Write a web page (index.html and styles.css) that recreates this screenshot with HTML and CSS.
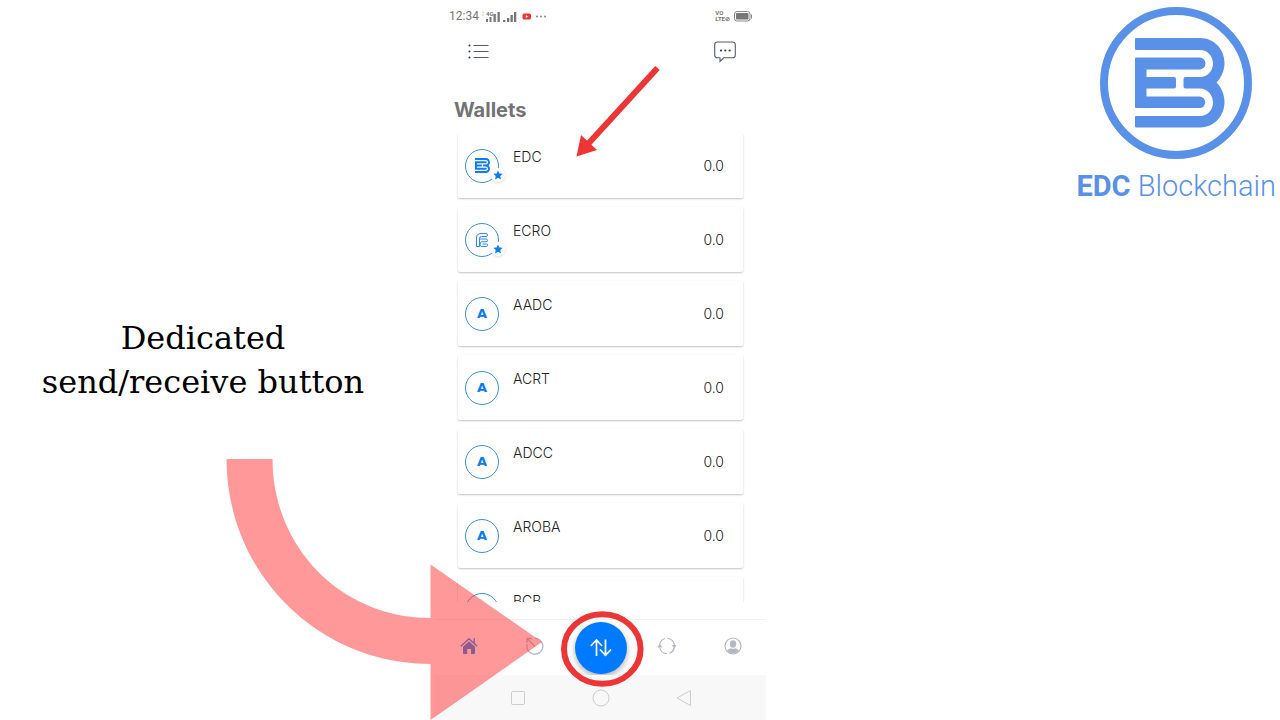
FILE: index.html
```
<!DOCTYPE html>
<html lang="en">
<head>
  <meta charset="UTF-8">
  <meta name="viewport" content="width=device-width, initial-scale=1.0">
  <title>EDC Blockchain - Wallets</title>
  <link rel="stylesheet" href="styles.css">
</head>
<body>
  <svg class="defs" aria-hidden="true">
    <symbol id="edc-mark" viewBox="66 38 90 90">
      <path d="M67 38H131C145 38 155.500 49 155.500 63C155.500 71 152 78 147.500 82.500C152 87 155.500 94 155.500 102C155.500 116 145 127.500 131 127.500H67Q66 127.500 66 126.500V117Q66 116 67 116H131C138.500 116 144 110 144 102.500S138.500 88.500 131 88.500H116.500Q114.500 88.500 114.500 86.500V79Q114.500 77 116.500 77H131C138.500 77 144 71 144 63.500S138.500 50 131 50H67Q66 50 66 49V39Q66 38 67 38Z"/>
      <path d="M67 57.500H130.500a6 6 0 0 1 0 12H77.500V77H105Q107 77 107 79V86.500Q107 88.500 105 88.500H77.500V96.500H130.500a5.800 5.800 0 0 1 0 11.600H67Q66 108 66 107V58.500Q66 57.500 67 57.500Z"/>
    </symbol>
    <symbol id="star" viewBox="0 0 10 10">
      <path d="M5 .4 6.400 3.400 9.700 3.800 7.300 6.100 7.900 9.400 5 7.800 2.100 9.400 2.700 6.100.3 3.800 3.600 3.400Z"/>
    </symbol>
  </svg>

  <main class="slide">
    <section class="caption">
      <p>Dedicated<br>send/receive button</p>
    </section>

    <section class="phone">
      <div class="status-bar">
        <span class="time">12:34</span>
        <svg class="signal" width="96" height="14" viewBox="0 0 96 14">
          <g fill="#777">
            <circle cx="1" cy="3" r=".5"/><circle cx="1" cy="6" r=".5"/>
            <path d="M4 10h2v3H4zM7.500 8h2v5h-2zM11.500 5h2.300v8h-2.300zM15.500 3h2.300v10h-2.300zM21 11h2.300v2H21zM25 9h2.300v4H25zM28.500 6h2.300v7h-2.300zM32 3h2.300v10H32z"/>
            <circle cx="55" cy="7.500" r=".9"/><circle cx="59" cy="7.500" r=".9"/><circle cx="63" cy="7.500" r=".9"/>
          </g>
          <text x="4" y="7" class="net">4G</text>
          <rect x="40.500" y="4.500" width="8.500" height="6" rx="1.500" fill="#e33"/>
          <path d="M43.800 6v3l2.500-1.500z" fill="#fff"/>
        </svg>
        <span class="volte">VO<br>LTE⊘</span>
        <svg width="18" height="12" viewBox="0 0 18 12">
          <rect x=".5" y="1.500" width="15.500" height="9.500" rx="2.500" fill="none" stroke="#888"/>
          <rect x="2" y="3" width="12.500" height="6.500" rx="1" fill="#777"/>
          <path d="M17.500 4.500v4" stroke="#888"/>
        </svg>
      </div>

      <header class="app-bar">
        <button type="button" aria-label="Menu">
          <svg width="22" height="16" viewBox="0 0 22 16" stroke="#555a6e" stroke-width="1.100" fill="#33384c">
            <path d="M5.500 1.500h15M5.500 7.500h15M5.500 13.500h15"/>
            <g stroke="none"><circle cx="1.500" cy="1.500" r="1"/><circle cx="1.500" cy="7.500" r="1"/><circle cx="1.500" cy="13.500" r="1"/></g>
          </svg>
        </button>
        <button type="button" aria-label="Messages">
          <svg width="22" height="22" viewBox="0 0 22 22" fill="none" stroke="#555a6e" stroke-width="1.100">
            <path d="M3.500 1H18.500Q21.300 1 21.300 3.800V14Q21.300 16.800 18.500 16.800H9.800L6 20.500V16.800H3.500Q.7 16.800.7 14V3.800Q.7 1 3.500 1Z"/>
            <g fill="#33384c" stroke="none"><circle cx="7" cy="9.500" r="1.100"/><circle cx="11.300" cy="9.500" r="1.100"/><circle cx="15.600" cy="9.500" r="1.100"/></g>
          </svg>
        </button>
      </header>

      <h1>Wallets</h1>

      <ul class="wallets">
        <li class="wallet">
          <span class="coin">
            <svg class="mark" width="15" height="15"><use href="#edc-mark"/></svg>
            <span class="badge"><svg width="10" height="10"><use href="#star"/></svg></span>
          </span>
          <span class="name">EDC</span><span class="amount">0.0</span>
        </li>
        <li class="wallet">
          <span class="coin">
            <svg class="outline" width="14" height="16" viewBox="0 0 14 16">
              <path d="M4.500 14.500H1.500V6Q1.500 1.500 6 1.500H11Q12.500 1.500 12.500 3T11 4.500H6.500Q4.500 4.500 4.500 6.500ZM4.500 7H11Q12.500 7 12.500 8.500T11 9.700H7Q5 10 5 12.500Q5 14.500 7 14.500H11.500Q12.700 14.500 12.700 13.200T11.500 12H7.500"/>
            </svg>
            <span class="badge"><svg width="10" height="10"><use href="#star"/></svg></span>
          </span>
          <span class="name">ECRO</span><span class="amount">0.0</span>
        </li>
        <li class="wallet"><span class="coin">A</span><span class="name">AADC</span><span class="amount">0.0</span></li>
        <li class="wallet"><span class="coin">A</span><span class="name">ACRT</span><span class="amount">0.0</span></li>
        <li class="wallet"><span class="coin">A</span><span class="name">ADCC</span><span class="amount">0.0</span></li>
        <li class="wallet"><span class="coin">A</span><span class="name">AROBA</span><span class="amount">0.0</span></li>
        <li class="wallet"><span class="coin"></span><span class="name">BCB</span></li>
      </ul>

      <nav class="tabs">
        <button type="button" aria-label="Home">
          <svg width="18" height="18" viewBox="0 0 18 18" fill="#1d80f0">
            <path d="M9 4.300 15 9.800V16Q15 17 14 17H11V12H7.200V17H4Q3 17 3 16V9.800Z"/>
            <path d="M.8 9.200 9 1.700 17.200 9.200M14.200 1v5" fill="none" stroke="#1d80f0" stroke-width="1.300"/>
          </svg>
        </button>
        <button type="button" aria-label="History">
          <svg width="18" height="18" viewBox="0 0 18 18" fill="none" stroke="#b4b6c6" stroke-width="1.300">
            <path d="M1.200 7A8 8 0 1 0 9 1.200M9 9.500 1.500 2M1 6V1.500H6"/>
          </svg>
        </button>
        <button type="button" class="transfer" aria-label="Send and receive">
          <svg width="22" height="20" viewBox="0 0 22 20" fill="none" stroke="#fff" stroke-width="1.700">
            <path d="M6.500 18V2.500M.8 8 6.500 2 12 8M15.500 1.500V17M10 11.500 15.500 17.300 21 11.500"/>
          </svg>
        </button>
        <button type="button" aria-label="Exchange">
          <svg width="18" height="18" viewBox="0 0 18 18" fill="none" stroke="#b4b6c6" stroke-width="1.200">
            <path d="M1.600 8A7.600 7.600 0 0 1 7 1.500M9.500 1.300A7.700 7.700 0 0 1 16.400 8M16.200 11A7.600 7.600 0 0 1 11.500 16.300M9 16.700A7.600 7.600 0 0 1 1.700 10.500"/>
            <path d="M.4 10h2.800L1.700 7.800zM14.900 8.500H17.600L16.300 10.500z" fill="#b4b6c6"/>
          </svg>
        </button>
        <button type="button" aria-label="Profile">
          <svg width="18" height="18" viewBox="0 0 18 18" fill="#b4b6c6">
            <circle cx="9" cy="9" r="8" fill="none" stroke="#b4b6c6" stroke-width="1.200"/>
            <ellipse cx="9" cy="7" rx="3.200" ry="3.700"/>
            <path d="M3 13.500Q5 11.500 7 11.300Q9 12.300 11 11.300Q13 11.500 15 13.500Q12.500 16.500 9 16.500T3 13.500Z"/>
          </svg>
        </button>
      </nav>

      <div class="system-bar">
        <button type="button" aria-label="Recent apps"><svg width="18" height="18" viewBox="0 0 18 18"><rect x="2.500" y="2.500" width="13" height="13" rx="1"/></svg></button>
        <button type="button" aria-label="Home screen"><svg width="18" height="18" viewBox="0 0 18 18"><circle cx="9" cy="9" r="8"/></svg></button>
        <button type="button" aria-label="Back"><svg width="18" height="18" viewBox="0 0 18 18"><path d="M15.500 1.500V16.500L2 9Z"/></svg></button>
      </div>

      <!-- annotations on top of the screen -->
      <svg class="red-arrow" width="84" height="92" viewBox="0 0 84 92">
        <path d="M81.500 2 12 78" stroke="#ee3535" stroke-width="6"/>
        <path d="M.5 90.500 5 69 21 84Z" fill="#ee3535"/>
      </svg>
      <svg class="red-ring" width="84" height="76" viewBox="0 0 84 76">
        <ellipse cx="42.300" cy="38" rx="38.300" ry="34.800" fill="none" stroke="#ee3535" stroke-width="6"/>
      </svg>
      <svg class="big-arrow" width="316" height="262" viewBox="0 0 316 262">
        <path d="M.5 1H46.500C46.500 89 115 160 204.500 160V106.500L316 184 204.500 262V206C91 206 .5 114 .5 1Z" fill="#f33" fill-opacity=".5"/>
      </svg>
    </section>

    <aside class="brand">
      <div class="logo">
        <svg width="152" height="152" viewBox="31 7 152 152">
          <circle cx="107" cy="83" r="72" fill="none" stroke="#5991e8" stroke-width="8"/>
          <use href="#edc-mark" x="66" y="38" width="90" height="90" fill="#5991e8"/>
        </svg>
        <p><strong>EDC</strong> Blockchain</p>
      </div>
    </aside>
  </main>
</body>
</html>
```
FILE: styles.css
```
* { margin: 0; padding: 0; box-sizing: border-box; }
body {
  background: #fff;
  color: #000;
  font-family: Inter, sans-serif;
}
svg {
  display: block;
}
button {
  background: none;
  border: none;
  cursor: pointer;
}
.defs {
  position: absolute;
  width: 0;
  height: 0;
}
.slide {
  display: grid;
  grid-template-columns: 434fr 332fr 514fr;
  height: 100vh;
  overflow: hidden;
}

.caption {
  display: flex;
  align-items: center;
  justify-content: center;
  padding-right: 28px;
  text-align: center;
  white-space: nowrap;
  font-family: "DejaVu Serif", serif;
  font-size: 32px;
  line-height: 44px;
}

.phone {
  position: relative;
  display: flex;
  flex-direction: column;
  height: 100vh;
  min-width: 0;
}
.status-bar {
  display: flex;
  align-items: center;
  height: 32px;
  padding: 0 14px 0 15px;
  color: #777;
  font-family: Roboto, sans-serif;
  font-size: 12px;
  line-height: 16px;
}
.signal {
  margin-left: 3px;
}
.net {
  fill: #777;
  font-size: 6px;
  font-weight: bold;
}
.volte {
  margin-left: auto;
  margin-right: 4px;
  font-size: 6px;
  font-weight: bold;
  line-height: 6px;
}
.app-bar {
  display: flex;
  align-items: center;
  justify-content: space-between;
  height: 40px;
  padding: 0 30px 0 34px;
}
h1 {
  padding: 24px 20px 9px;
  color: #737373;
  font-size: 20px;
  line-height: 28px;
  font-weight: 700;
}

.wallets {
  flex: 1;
  min-height: 0;
  overflow: hidden;
  display: flex;
  flex-direction: column;
  gap: 9px;
  padding: 0 23px 0 24px;
  list-style: none;
}
.wallet {
  flex: none;
  display: flex;
  align-items: center;
  height: 65px;
  padding: 0 19px 0 7px;
  background: #fff;
  border-radius: 2px;
  box-shadow: 0 1px 2px rgba(0, 0, 0, 0.24);
}
.coin {
  position: relative;
  display: flex;
  align-items: center;
  justify-content: center;
  width: 34px;
  height: 34px;
  border: 1px solid #3a8ee6;
  border-radius: 50%;
  color: #0a7cf5;
  font-family: "DejaVu Sans", sans-serif;
  font-size: 13px;
  font-weight: 700;
}
.mark {
  fill: #0a7cf5;
}
.outline {
  fill: none;
  stroke: #2a8af0;
}
.badge {
  position: absolute;
  right: -7px;
  bottom: 0;
  padding: 2px;
  border-radius: 50%;
  background: #fff;
  box-shadow: 0 1px 3px rgba(0, 0, 0, 0.15);
  fill: #0a7cf5;
}
.name {
  align-self: flex-start;
  margin: 15px auto 0 14px;
}
.name,
.amount {
  color: #222;
  font-size: 14px;
  line-height: 18px;
  font-weight: 300;
}

.tabs {
  display: grid;
  grid-template-columns: repeat(5, 1fr);
  place-items: center;
  height: 56px;
  margin-top: 17px;
  padding-left: 2px;
  border-top: 1px solid #f2f2f2;
}
.tabs button {
  padding-bottom: 3px;
}
.tabs .transfer {
  display: grid;
  place-items: center;
  width: 52px;
  height: 52px;
  padding: 0;
  border-radius: 50%;
  background: #007aff;
  box-shadow: 0 3px 6px rgba(0, 0, 0, 0.3);
}
.system-bar {
  display: grid;
  grid-template-columns: repeat(3, 1fr);
  place-items: center;
  height: 45px;
  padding: 0 41px 0 43px;
  background: #f8f8f8;
  fill: none;
  stroke: #ccc;
}

.red-arrow,
.red-ring,
.big-arrow {
  position: absolute;
  pointer-events: none;
}
.red-arrow {
  top: 66px;
  left: 142px;
}
.red-ring {
  bottom: 33px;
  left: 126px;
}
.big-arrow {
  bottom: 0;
  left: -208px;
}

.brand {
  display: flex;
  justify-content: flex-end;
  align-items: flex-start;
  padding: 7px 4px 0;
}
.logo {
  display: flex;
  flex-direction: column;
  align-items: center;
  color: #5991e8;
  font-family: Roboto, sans-serif;
  font-size: 29px;
  font-weight: 300;
  line-height: 36px;
  white-space: nowrap;
}
.logo p {
  margin-top: 9px;
}
.logo strong {
  font-weight: 700;
}
```
